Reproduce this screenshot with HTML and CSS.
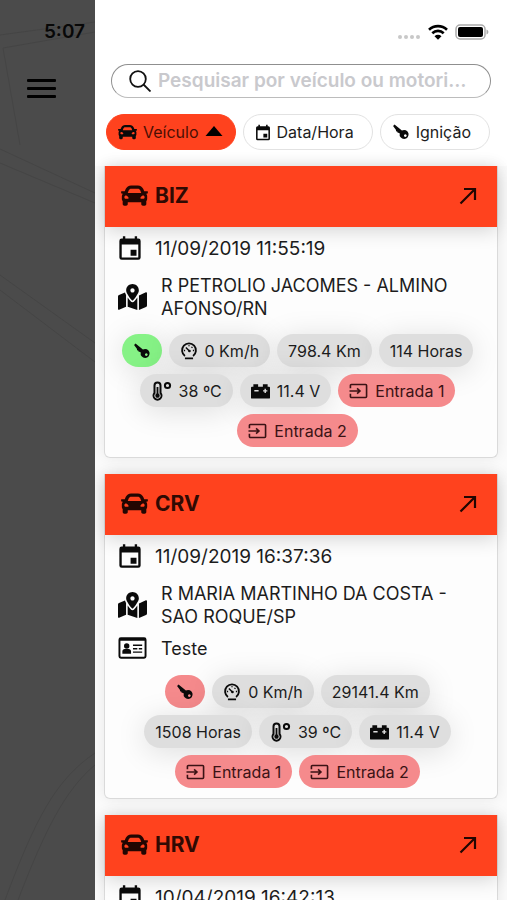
FILE: index.html
```html
<!DOCTYPE html>
<html lang="pt-BR">
<head>
<meta charset="utf-8">
<meta name="viewport" content="width=device-width, initial-scale=1">
<title>Veículos</title>
<link rel="stylesheet" href="styles.css">
</head>
<body>
<svg class="sprite" aria-hidden="true">
  <symbol id="car" viewBox="0 48 512 416"><path d="M499.99 176h-59.87l-16.64-41.6C406.38 91.63 365.57 64 319.5 64h-127c-46.06 0-86.88 27.63-103.99 70.4L71.87 176H12.01C4.2 176-1.53 183.34.37 190.91l6 24C7.7 220.25 12.5 224 18.01 224h20.07C24.65 235.73 16 252.78 16 272v48c0 16.12 6.16 30.67 16 41.93V416c0 17.67 14.33 32 32 32h32c17.67 0 32-14.33 32-32v-32h256v32c0 17.67 14.33 32 32 32h32c17.67 0 32-14.33 32-32v-54.07c9.84-11.25 16-25.8 16-41.93v-48c0-19.22-8.65-36.27-22.07-48H494c5.51 0 10.31-3.75 11.64-9.09l6-24c1.89-7.57-3.84-14.91-11.65-14.91zm-352.06-17.83c7.29-18.22 24.94-30.17 44.57-30.17h127c19.63 0 37.28 11.95 44.57 30.17L384 208H128l19.93-49.83zM96 319.8c-19.2 0-32-12.76-32-31.9S76.8 256 96 256s48 28.71 48 47.85-28.8 15.95-48 15.95zm320 0c-19.2 0-48 3.19-48-15.95S396.8 256 416 256s32 12.76 32 31.9-12.8 31.9-32 31.9z"/></symbol>
  <symbol id="calendar" viewBox="2 1 20 22"><path d="M19 4h-1V2h-2v2H8V2H6v2H5a2 2 0 0 0-2 2v14a2 2 0 0 0 2 2h14a2 2 0 0 0 2-2V6a2 2 0 0 0-2-2zm0 16H5V9h14v11zM12.500 13.500h5v5h-5z"/></symbol>
  <symbol id="map" viewBox="0 0 576 512"><path d="M288 0c-69.59 0-126 56.41-126 126 0 56.26 82.35 158.8 113.9 196.02 6.39 7.54 17.82 7.54 24.2 0C331.65 284.8 414 182.26 414 126 414 56.41 357.59 0 288 0zm0 168c-23.2 0-42-18.8-42-42s18.8-42 42-42 42 18.8 42 42-18.8 42-42 42zM20.12 215.95A32.006 32.006 0 0 0 0 245.66v250.32c0 11.32 11.43 19.06 21.94 14.86L160 448V214.92c-8.84-15.98-16.07-31.54-21.25-46.42L20.12 215.95zM288 359.67c-14.07 0-27.38-6.18-36.51-16.96-19.66-23.2-40.57-49.62-59.49-76.72v182l192 64V266c-18.92 27.09-39.82 53.52-59.49 76.72-9.13 10.77-22.44 16.95-36.51 16.95zm266.06-198.51L416 224v288l139.88-55.95A31.996 31.996 0 0 0 576 426.34V176.02c0-11.32-11.43-19.06-21.94-14.86z"/></symbol>
  <symbol id="key" viewBox="0 0 20 20"><path fill-rule="evenodd" d="M1.200 3.200 2.800 1.800 11 8.400A5 5 0 1 1 8.600 11.600L7.500 10.800 6.500 11.200 6 9.600 4.600 9.300 4.300 7.600zM14.800 12.600a1.500 1.500 0 1 0 .01 0z"/></symbol>
  <symbol id="gauge" viewBox="0 0 20 20"><path fill="none" stroke="currentColor" stroke-width="2" d="M5.500 15.500A7.700 7.700 0 1 1 14.500 15.500M5.500 18.300h9"/><path fill="none" stroke="currentColor" stroke-width="1.600" d="M6.500 6l4.200 4.200M10 3.500v1.300M4.300 9.500h1.400M14.300 9.500h1.400M12.800 6.500l1-1"/><circle cx="10.500" cy="10" r="1.500"/></symbol>
  <symbol id="thermo" viewBox="0 0 21 20"><path fill="none" stroke="currentColor" stroke-width="2" d="M3.500 4.500a3 3 0 0 1 6 0V12a4 4 0 1 1-6 0z"/><path d="M5.600 6h1.800v6.600a2.200 2.200 0 1 1-1.800 0z"/><circle cx="16.500" cy="4.500" r="2.600" fill="none" stroke="currentColor" stroke-width="2"/></symbol>
  <symbol id="battery" viewBox="0 0 20 16"><path fill-rule="evenodd" d="M2.500 1h5v2.500h5V1h5v2.500H19a1 1 0 0 1 1 1V15a1 1 0 0 1-1 1H1a1 1 0 0 1-1-1V4.500a1 1 0 0 1 1-1h1.500zM3.500 7v1.500h4.500V7zM14.200 5.600v1.500h-1.500v1.500h1.500v1.500h1.500V8.600h1.500V7.100h-1.500V5.600z"/></symbol>
  <symbol id="input" viewBox="0 0 20 16"><path fill="none" stroke="currentColor" stroke-width="1.700" d="M1.500 5V2.200a1 1 0 0 1 1-1h15a1 1 0 0 1 1 1v11.600a1 1 0 0 1-1 1h-15a1 1 0 0 1-1-1V11M.5 8H11M8.500 5.300 11.500 8l-3 2.700"/></symbol>
  <symbol id="card" viewBox="0 0 30 24"><path fill-rule="evenodd" d="M3 1h24a2.500 2.500 0 0 1 2.500 2.500v17A2.500 2.500 0 0 1 27 23H3A2.500 2.500 0 0 1 .5 20.500v-17A2.500 2.500 0 0 1 3 1zM2.500 4.500v16l.5.500h24l.5-.5v-16z"/><circle cx="9" cy="10" r="2.800"/><path d="M4.500 18v-2.500c0-1.500 1-2.500 2.500-2.500h4c1.500 0 2.500 1 2.500 2.500V18zM15.500 8.500H25V10h-9.500zM15.500 12H20v1.500h-4.500zM21.500 12H25v1.500h-3.500zM15.500 15.500H25V17h-9.500z"/></symbol>
  <symbol id="arrow" viewBox="0 0 18 18"><path fill="none" stroke="currentColor" stroke-width="2.200" d="M1.500 16.500 15.500 2.500M5 2h11v11"/></symbol>
</svg>

<div class="app">
  <aside class="backdrop">
    <svg class="roads" viewBox="0 0 95 900" preserveAspectRatio="none" aria-hidden="true">
      <path d="M0 35 95 22M3 48 95 32M3 48 20 145M0 149 95 193M0 163 95 203M0 275 95 343M0 290 95 362M5 900C35 820 55 780 95 753M18 900C45 830 65 790 95 765"/>
    </svg>
    <time class="clock">5:07</time>
    <button class="menu" type="button" aria-label="Menu"><span></span><span></span><span></span></button>
  </aside>

  <main class="drawer">
    <div class="status">
      <svg width="24" height="6" viewBox="0 0 24 6" fill="#c8c8c8"><circle cx="3" cy="3" r="2"/><circle cx="9" cy="3" r="2"/><circle cx="15" cy="3" r="2"/><circle cx="21" cy="3" r="2"/></svg>
      <svg width="20" height="16" viewBox="0 0 20 16" fill="none" stroke="#000" stroke-width="2.600"><path d="M1 5.700a13 13 0 0 1 18 0M4.300 9.200a8.200 8.200 0 0 1 11.400 0"/><path fill="#000" stroke="none" d="M6.500 12.200a5 5 0 0 1 7 0L10 15.800z"/></svg>
      <svg width="34" height="16" viewBox="0 0 34 16"><rect x="1" y="1" width="29" height="14" rx="4" fill="none" stroke="#aaa" stroke-width="1.500"/><rect x="3" y="3" width="25" height="10" rx="2"/><path fill="#aaa" d="M31.500 5.500c2.500.8 2.500 4.200 0 5z"/></svg>
    </div>

    <label class="search">
      <svg width="22" height="22" viewBox="0 0 22 22" fill="none" stroke="#111" stroke-width="1.800"><circle cx="9" cy="9" r="7.800"/><path d="M14.500 14.500 21.500 21.500"/></svg>
      <input type="text" placeholder="Pesquisar por veículo ou motorista" aria-label="Pesquisar por veículo ou motorista">
    </label>

    <div class="filters">
      <button class="filter active" type="button"><svg class="ic car-sm"><use href="#car"/></svg>Veículo<svg width="18" height="12" viewBox="0 0 18 12"><path d="M9 0 17.500 10H.5z"/></svg></button>
      <button class="filter" type="button"><svg class="ic cal-sm"><use href="#calendar"/></svg>Data/Hora</button>
      <button class="filter" type="button"><svg class="ic key"><use href="#key"/></svg>Ignição</button>
    </div>

    <section class="list">
      <article class="card">
        <header><svg class="ic car"><use href="#car"/></svg><h2>BIZ</h2><button class="open" type="button" aria-label="Abrir BIZ"><svg class="ic arrow"><use href="#arrow"/></svg></button></header>
        <div class="body">
          <p class="row date"><svg class="ic cal"><use href="#calendar"/></svg>11/09/2019 11:55:19</p>
          <p class="row place"><svg class="ic map"><use href="#map"/></svg><span>R PETROLIO JACOMES - ALMINO AFONSO/RN</span></p>
          <ul class="chips">
            <li class="chip on"><svg class="ic key"><use href="#key"/></svg></li>
            <li class="chip"><svg class="ic gauge"><use href="#gauge"/></svg>0 Km/h</li>
            <li class="chip">798.4 Km</li>
            <li class="chip">114 Horas</li>
            <li class="chip"><svg class="ic thermo"><use href="#thermo"/></svg>38 ºC</li>
            <li class="chip"><svg class="ic input"><use href="#battery"/></svg>11.4 V</li>
            <li class="chip off"><svg class="ic input"><use href="#input"/></svg>Entrada 1</li>
            <li class="chip off"><svg class="ic input"><use href="#input"/></svg>Entrada 2</li>
          </ul>
        </div>
      </article>

      <article class="card">
        <header><svg class="ic car"><use href="#car"/></svg><h2>CRV</h2><button class="open" type="button" aria-label="Abrir CRV"><svg class="ic arrow"><use href="#arrow"/></svg></button></header>
        <div class="body">
          <p class="row date"><svg class="ic cal"><use href="#calendar"/></svg>11/09/2019 16:37:36</p>
          <p class="row place"><svg class="ic map"><use href="#map"/></svg><span>R MARIA MARTINHO DA COSTA - SAO ROQUE/SP</span></p>
          <p class="row driver"><svg class="ic id"><use href="#card"/></svg><span>Teste</span></p>
          <ul class="chips">
            <li class="chip off"><svg class="ic key"><use href="#key"/></svg></li>
            <li class="chip"><svg class="ic gauge"><use href="#gauge"/></svg>0 Km/h</li>
            <li class="chip">29141.4 Km</li>
            <li class="chip">1508 Horas</li>
            <li class="chip"><svg class="ic thermo"><use href="#thermo"/></svg>39 ºC</li>
            <li class="chip"><svg class="ic input"><use href="#battery"/></svg>11.4 V</li>
            <li class="chip off"><svg class="ic input"><use href="#input"/></svg>Entrada 1</li>
            <li class="chip off"><svg class="ic input"><use href="#input"/></svg>Entrada 2</li>
          </ul>
        </div>
      </article>

      <article class="card">
        <header><svg class="ic car"><use href="#car"/></svg><h2>HRV</h2><button class="open" type="button" aria-label="Abrir HRV"><svg class="ic arrow"><use href="#arrow"/></svg></button></header>
        <div class="body">
          <p class="row date"><svg class="ic cal"><use href="#calendar"/></svg>10/04/2019 16:42:13</p>
        </div>
      </article>
    </section>
  </main>
</div>
</body>
</html>
```
FILE: styles.css
```css
* { box-sizing: border-box; }

body {
  margin: 0;
  font-family: Inter, "Liberation Sans", sans-serif;
  color: #1c1c1c;
  background: #fff;
}

h2, p, ul { margin: 0; padding: 0; }
button { font: inherit; color: inherit; border: 0; background: none; padding: 0; }

.sprite { position: absolute; width: 0; height: 0; }
.ic { flex: none; fill: currentColor; color: #0a0a0a; }

.app {
  display: grid;
  grid-template-columns: 95px minmax(0, 1fr);
  height: 100vh;
  overflow: hidden;
}

/* Dimmed map behind the drawer */
.backdrop {
  position: relative;
  display: flex;
  flex-direction: column;
  padding: 20px 10px 0 27px;
  background: #4b4b4b;
}
.roads {
  position: absolute;
  inset: 0;
  width: 100%;
  height: 100%;
  fill: none;
  stroke: #454545;
}
.clock {
  align-self: flex-end;
  font-size: 19px;
  line-height: 24px;
  font-weight: 600;
  color: #080808;
  z-index: 1;
}
.menu {
  display: grid;
  gap: 5px;
  width: 29px;
  margin-top: 35px;
  z-index: 1;
}
.menu span { height: 3px; border-radius: 1px; background: #000; }

.drawer {
  display: flex;
  flex-direction: column;
  min-height: 0;
  overflow: hidden;
}

.status {
  display: flex;
  justify-content: flex-end;
  align-items: center;
  gap: 7px;
  height: 24px;
  margin: 20px 18px 0 0;
}
.status svg:first-child { margin-top: 10px; }

.search {
  display: flex;
  align-items: center;
  gap: 7px;
  flex: none;
  height: 34px;
  margin: 20px 16px 0;
  padding: 0 18px 0 17px;
  border: 1px solid #8f8f8f;
  border-bottom-color: #bcbcbc;
  border-radius: 17px;
}
.search svg { flex: none; }
.search input {
  flex: 1;
  min-width: 0;
  border: 0;
  outline: 0;
  padding: 0;
  background: none;
  font: 600 19px/24px Inter, sans-serif;
  text-overflow: ellipsis;
}
.search input::placeholder { color: #c9c9cd; opacity: 1; }

.filters {
  display: flex;
  gap: 7px;
  flex: none;
  margin: 16px 17px 16px 11px;
}
.filter {
  display: flex;
  flex: 1 1 auto;
  align-items: center;
  gap: 6px;
  height: 36px;
  padding: 0 17px 0 11px;
  border: 1px solid #e2e2e2;
  border-radius: 18px;
  font-size: 16px;
  white-space: nowrap;
}
.filter.active { padding-right: 11px; background: #ff421e; border-color: #ff421e; color: #4a0f04; }
.car-sm { width: 19px; height: 16px; }
.cal-sm { width: 16px; height: 17px; }

.list {
  flex: 1;
  display: flex;
  flex-direction: column;
  gap: 16px;
  min-height: 0;
  padding: 0 9px;
  background: #fbfbfb;
}

.card {
  flex: none;
  border: 1px solid #dadada;
  border-top: 0;
  border-radius: 0 0 6px 6px;
  background: #fdfdfd;
  box-shadow: 0 0 14px rgba(0, 0, 0, .08);
}
.card header {
  display: flex;
  align-items: center;
  gap: 7px;
  height: 61px;
  padding: 0 20px 2px 16px;
  background: #ff421e;
  box-shadow: 0 4px 18px rgba(0, 0, 0, .16);
}
.card h2 {
  flex: 1;
  font-size: 21px;
  line-height: 26px;
  font-weight: 700;
  color: #300a03;
}
.car { width: 27px; height: 23px; color: #220602; }
.open { display: flex; }
.arrow { width: 18px; height: 18px; color: #220602; }

.body { padding: 8px 10px 10px; }
.row {
  display: flex;
  align-items: center;
  padding-left: 3px;
  font-size: 18px;
  line-height: 23px;
}
.date { gap: 13px; height: 26px; font-size: 19px; }
.cal { width: 24px; height: 26px; }
.place { gap: 14px; margin-top: 13px; }
.map { width: 29px; height: 26px; }
.driver { gap: 14px; margin-top: 8px; height: 24px; }
.driver + .chips { margin-top: 15px; }
.id { width: 29px; height: 24px; }

.chips {
  display: flex;
  flex-wrap: wrap;
  justify-content: center;
  gap: 7px;
  margin-top: 14px;
  padding-right: 7px;
  list-style: none;
}
.chip {
  display: flex;
  align-items: center;
  gap: 7px;
  height: 33px;
  padding: 0 11px;
  border-radius: 17px;
  background: #dedede;
  font-size: 16px;
  line-height: 20px;
  box-shadow: 0 4px 30px rgba(0, 0, 0, .13);
}
.chip.on { background: #86f286; }
.chip.off { background: #f58a8c; color: #3a1214; box-shadow: none; }
.chip.off .input { color: #3a1214; }
.key { width: 18px; height: 18px; }
.gauge { width: 18px; height: 18px; }
.thermo { width: 21px; height: 20px; }
.input { width: 19px; height: 16px; }
```
